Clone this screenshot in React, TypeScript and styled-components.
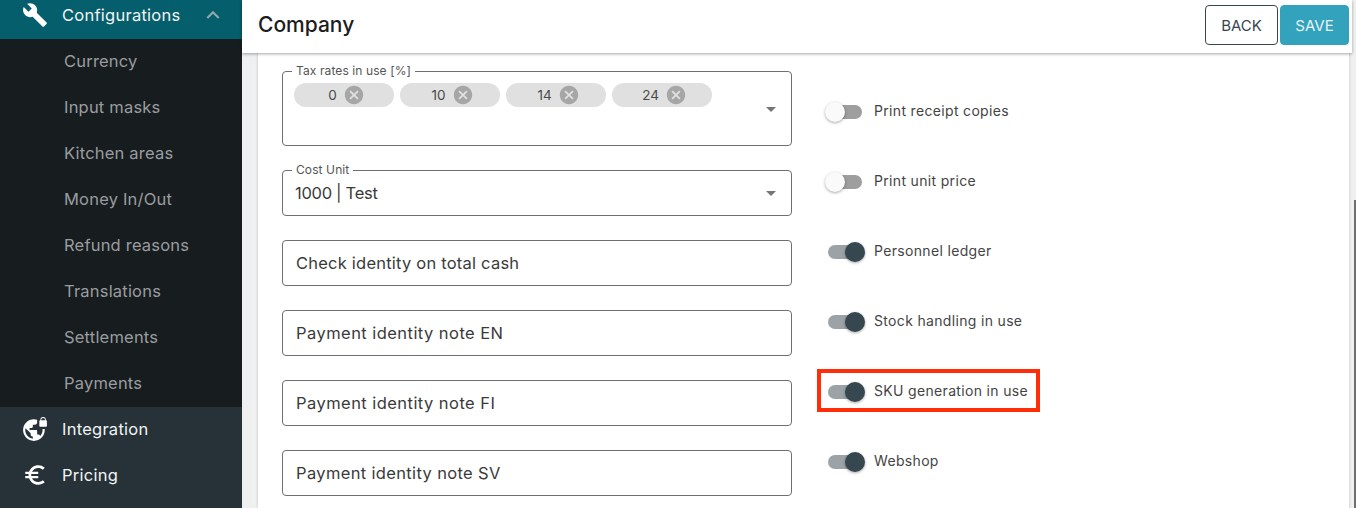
import React from "react";
import styled, { createGlobalStyle } from "styled-components";
import { MdBuild, MdVpnLock, MdEuroSymbol, MdExpandLess, MdCancel, MdArrowDropDown } from "react-icons/md";

const Global = createGlobalStyle`
  html, body { margin: 0; padding: 0; height: 508px; overflow: hidden; background: #f0f0f0; }
  body { font-family: Inter, "Open Sans", "Liberation Sans", sans-serif; }
  *, *::before, *::after { box-sizing: border-box; }
`;
const Page = styled.div`display: flex; width: 1356px; height: 508px; overflow: hidden;`;
const Sidebar = styled.nav`width: 242px; flex: none; background: #263238; display: flex; flex-direction: column;`;
const NavItem = styled.div<{ $active?: boolean }>`
  height: ${p => (p.$active ? 39 : 46)}px;
  padding-bottom: ${p => (p.$active ? 9 : 2)}px;
  display: flex; align-items: center; color: #f1f4f5; font-size: 16.5px; letter-spacing: 0.25px;
  background: ${p => (p.$active ? "#055e6b" : "transparent")};
`;
const NavIcon = styled.span`width: 62px; flex: none; padding-left: 22px; display: flex; align-items: center; font-size: 26px; color: #fff;`;
const Chevron = styled.span`margin-left: auto; margin-right: 16px; display: flex; font-size: 26px; color: #8fa9ad;`;
const SubMenu = styled.div`background: #171c1f; display: flex; flex-direction: column;`;
const SubItem = styled.div`height: 46px; padding: 0 0 3px 64px; display: flex; align-items: center; color: #9a9d9f; font-size: 16.5px; letter-spacing: 0.2px;`;
const Main = styled.main`flex: 1; min-width: 0; display: flex; flex-direction: column; position: relative;`;
const Header = styled.header`
  height: 53px; width: 1110px; flex: none; padding: 5px 3px 0 16px; background: #fff; box-shadow: 0 1px 3px rgba(0,0,0,.35);
  display: flex; align-items: flex-start; justify-content: space-between; position: relative; z-index: 1;
`;
const Title = styled.h1`margin: 0; padding-top: 5px; font-size: 21px; line-height: 30px; font-weight: 500; color: #1d1d1d;`;
const Actions = styled.div`display: flex; gap: 2px;`;
const Button = styled.button<{ $primary?: boolean }>`
  width: ${p => (p.$primary ? 69 : 73)}px; height: 40px; padding: 0; border-radius: 4px; font: inherit; font-size: 15px; letter-spacing: 0;
  color: ${p => (p.$primary ? "#e6f4f7" : "#37474f")};
  background: ${p => (p.$primary ? "#33a2bd" : "#fff")};
  border: 1px solid ${p => (p.$primary ? "#33a2bd" : "#37474f")};
`;
const Card = styled.section`
  margin-left: 16px; width: 1091px; flex: 1; background: #fff; box-shadow: 0 0 3px rgba(0,0,0,.2);
  padding: 18px 0 0 24px; display: grid; grid-template-columns: 510px auto; column-gap: 36px; align-content: start;
`;
const Fields = styled.div`display: flex; flex-direction: column; gap: 24px;`;
const Field = styled.div<{ $tall?: boolean; $tracking?: number }>`
  position: relative; width: 510px; height: ${p => (p.$tall ? 75 : 46)}px; border: 1px solid #6f6f6f; border-radius: 4px;
  padding: ${p => (p.$tall ? "11px 11px" : "0 13px")}; display: flex; align-items: ${p => (p.$tall ? "flex-start" : "center")};
  font-size: 16.5px; color: #3a3a3a; letter-spacing: ${p => p.$tracking ?? 0.2}px;
`;
const CostValue = styled.span`margin-left: -1px; letter-spacing: -0.3px;`;
const Legend = styled.span`
  position: absolute; top: -9px; left: 9px; padding: 0 4px; background: #fff; font-size: 12px; line-height: 15px; color: #555; letter-spacing: 0.1px;
`;
const Arrow = styled.span`position: absolute; right: 8px; top: 50%; transform: translateY(-50%); display: flex; font-size: 24px; color: #757575;`;
const Chip = styled.span`
  width: 100px; height: 24px; margin-right: 6px; border-radius: 12px; background: #e0e0e0; color: #4a4a4a; font-size: 13.5px; letter-spacing: 0;
  display: flex; align-items: center; justify-content: center; gap: 6px; padding-left: 5px;
`;
const ChipIcon = styled.span`display: flex; font-size: 22px; color: #a6a6a6;`;
const Toggles = styled.div`padding-top: 6px; display: flex; flex-direction: column;`;
const ToggleRow = styled.div<{ $highlight?: boolean }>`
  height: 70px; display: flex; align-items: center; gap: 12px; position: relative; font-size: 14px; letter-spacing: 0.33px; color: #444; width: fit-content;
  ${p => p.$highlight && `&::after { content: ""; position: absolute; left: -11px; right: -12px; top: 12px; height: 43px; border: 4px solid #ff2d0a; }`}
`;
const ToggleLabel = styled.span`padding-bottom: 4px;`;
const Track = styled.span<{ $on?: boolean }>`
  position: relative; width: 34px; height: 14px; border-radius: 7px; background: ${p => (p.$on ? "#9ba3a7" : "#9e9e9e")}; flex: none;
`;
const Thumb = styled.span<{ $on?: boolean }>`
  position: absolute; top: -3px; left: ${p => (p.$on ? 17 : -3)}px; width: 20px; height: 20px; border-radius: 50%;
  background: ${p => (p.$on ? "#37474f" : "#fafafa")}; box-shadow: 0 1px 3px rgba(0,0,0,.35);
`;
const Scrollbar = styled.div`position: absolute; right: 0; top: 200px; width: 2px; height: 308px; background: #6f6f6f;`;

const sub = ["Currency", "Input masks", "Kitchen areas", "Money In/Out", "Refund reasons", "Translations", "Settlements", "Payments"];
const toggles = [
  { label: "Print receipt copies", on: false },
  { label: "Print unit price", on: false },
  { label: "Personnel ledger", on: true },
  { label: "Stock handling in use", on: true },
  { label: "SKU generation in use", on: true, highlight: true },
  { label: "Webshop", on: true },
];

export default function App() {
  return (
    <Page>
      <Global />
      <Sidebar>
        <NavItem $active>
          <NavIcon><MdBuild /></NavIcon>Configurations
          <Chevron><MdExpandLess /></Chevron>
        </NavItem>
        <SubMenu>{sub.map(s => <SubItem key={s}>{s}</SubItem>)}</SubMenu>
        <NavItem><NavIcon><MdVpnLock /></NavIcon>Integration</NavItem>
        <NavItem><NavIcon><MdEuroSymbol /></NavIcon>Pricing</NavItem>
      </Sidebar>
      <Main>
        <Header>
          <Title>Company</Title>
          <Actions>
            <Button>BACK</Button>
            <Button $primary>SAVE</Button>
          </Actions>
        </Header>
        <Card>
          <Fields>
            <Field $tall>
              <Legend>Tax rates in use [%]</Legend>
              {["0", "10", "14", "24"].map(v => (
                <Chip key={v}>{v}<ChipIcon><MdCancel /></ChipIcon></Chip>
              ))}
              <Arrow><MdArrowDropDown /></Arrow>
            </Field>
            <Field>
              <Legend>Cost Unit</Legend>
              <CostValue>1000 | Test</CostValue>
              <Arrow><MdArrowDropDown /></Arrow>
            </Field>
            <Field $tracking={0.22}>Check identity on total cash</Field>
            <Field $tracking={0.45}>Payment identity note EN</Field>
            <Field $tracking={0.45}>Payment identity note FI</Field>
            <Field $tracking={0.35}>Payment identity note SV</Field>
          </Fields>
          <Toggles>
            {toggles.map(t => (
              <ToggleRow key={t.label} $highlight={t.highlight}>
                <Track $on={t.on}><Thumb $on={t.on} /></Track>
                <ToggleLabel>{t.label}</ToggleLabel>
              </ToggleRow>
            ))}
          </Toggles>
        </Card>
        <Scrollbar />
      </Main>
    </Page>
  );
}
